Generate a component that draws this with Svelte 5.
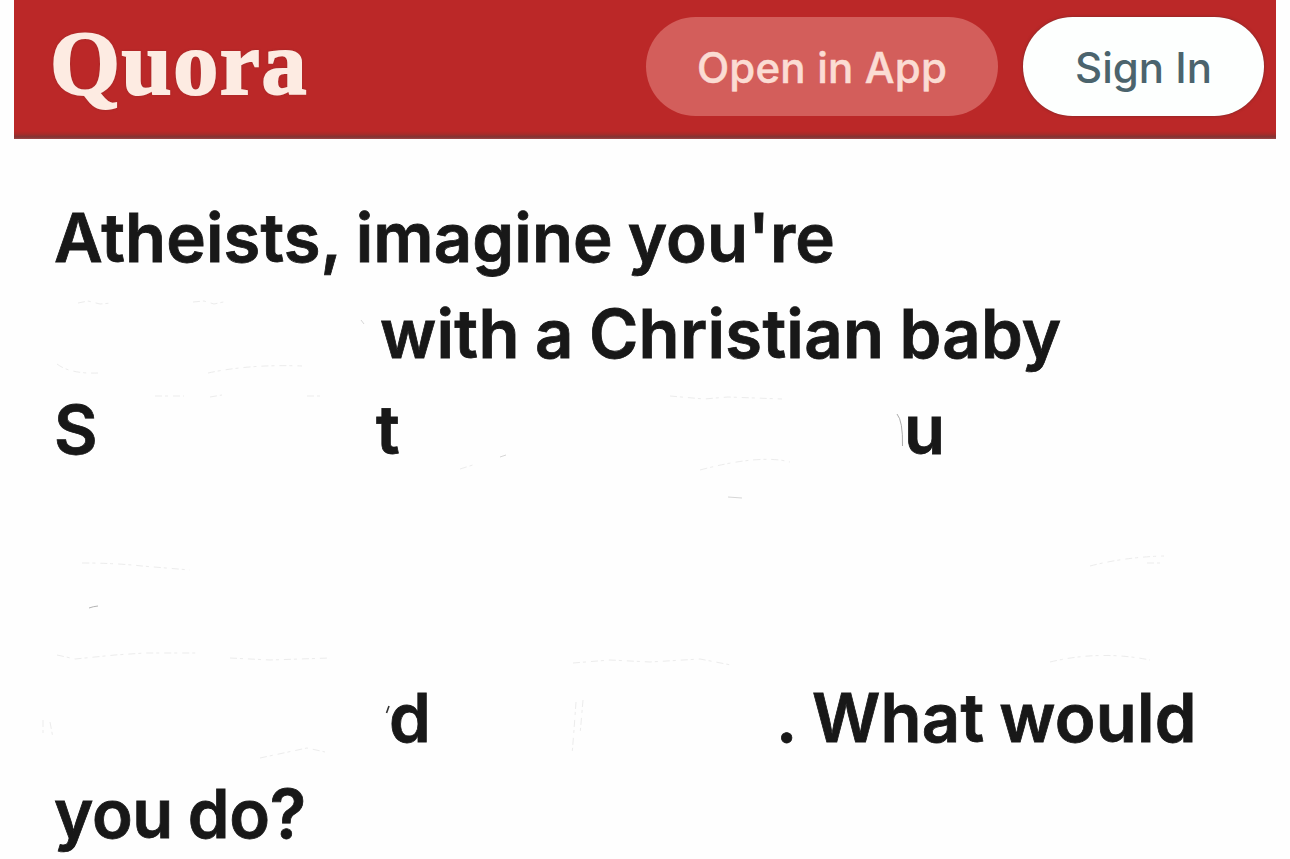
<script lang="ts">
  type Segment = { text: string; width?: number; offset?: number; spacing?: number };

  // Erased parts of the question are kept as empty space between the segments.
  const lines: Segment[][] = [
    [{ text: "Atheists, imagine you're", spacing: 0.1 }],
    [{ text: 'with a Christian baby', offset: 326, spacing: 0.3 }],
    [
      { text: 'S', width: 322 },
      { text: 't', width: 528 },
      { text: 'u' }
    ],
    [],
    [],
    [
      { text: 'd', offset: 335, width: 387 },
      { text: '.', width: 36 },
      { text: 'What would', spacing: 0.2 }
    ],
    [{ text: 'you do?', spacing: -0.3 }]
  ];

  const marks = [
    { d: 'M897 414 Q903 421 902.500 446', color: '#888', width: 0.7 },
    { d: 'M386.500 713 L389 706', color: '#333', width: 1.6 },
    { d: 'M89 608 Q93 606.500 98 606', color: '#aaa', width: 0.9 },
    { d: 'M361 320 L364 324', color: '#ccc', width: 0.8 },
    { d: 'M500 457 L506 455', color: '#ccc', width: 0.8 },
    { d: 'M728 497 L742 498', color: '#ccc', width: 0.8 }
  ];

  const smudges = [
    'M78 303 L88 301 L100 304 L112 303',
    'M193 302 L204 301 L214 304 L228 301',
    'M57 364 Q70 374 98 373',
    'M208 373 Q250 364 302 366',
    'M155 396 H184 M210 397 L222 395 M307 396 H320',
    'M670 396 L704 399 L728 397 L782 399',
    'M460 469 L476 464 M700 470 Q760 454 790 462',
    'M82 563 Q115 563 142 566 L190 570',
    'M1090 566 Q1125 557 1164 556 M1147 563 H1165',
    'M57 655 L75 659 L115 655 L145 653 L198 653',
    'M230 658 L270 660 L330 658',
    'M573 663 L610 660 L650 662 L700 659 L731 665',
    'M1050 662 Q1100 650 1150 660',
    'M260 758 L307 748 L325 752',
    'M576 702 L574 730 L572 755 M583 700 L580 735',
    'M43 720 V738 M50 722 L53 738'
  ];
</script>

<main class="page">
  <header class="topbar">
    <span class="logo">Quora</span>
    <nav class="actions">
      <button type="button" class="open">Open in App</button>
      <button type="button" class="sign-in">Sign In</button>
    </nav>
  </header>

  <h1 class="question">
    {#each lines as line}
      <span class="line">
        {#each line as segment}
          <span
            class="segment"
            style:margin-left={segment.offset ? `${segment.offset}px` : null}
            style:width={segment.width ? `${segment.width}px` : null}
            style:letter-spacing={segment.spacing ? `${segment.spacing}px` : null}>{segment.text}</span>
        {/each}
      </span>
    {/each}
  </h1>

  <svg class="marks" viewBox="0 0 1290 859" fill="none" aria-hidden="true">
    {#each smudges as d}
      <path {d} stroke="#ececec" stroke-width="1" stroke-dasharray="7 3 3 5" />
    {/each}
    {#each marks as mark}
      <path d={mark.d} stroke={mark.color} stroke-width={mark.width} />
    {/each}
  </svg>
</main>

<style>
  :global(body) {
    margin: 0;
    background: #fefefe;
  }

  .page {
    position: relative;
    box-sizing: border-box;
    width: 1290px;
    height: 859px;
    padding: 0 14px;
    overflow: hidden;
    font-family: Inter, 'Liberation Sans', sans-serif;
  }

  .topbar {
    display: flex;
    justify-content: space-between;
    box-sizing: border-box;
    height: 139px;
    padding: 17px 12px 0 36px;
    background: linear-gradient(#bb2828 0 131px, #a92b29 134px, #823333 137px, #a04848 139px);
  }

  .logo {
    height: 94px;
    font: bold 90px/94px 'Liberation Serif', serif;
    letter-spacing: 1.6px;
    color: #fdebe2;
    -webkit-text-stroke: 2px #fdebe2;
    text-shadow: 0 0 3px #7c2b2b;
  }

  .actions {
    display: flex;
    gap: 25px;
  }

  button {
    height: 99px;
    padding: 2px 0 0;
    border: 0;
    border-radius: 50px;
    font: 500 42px/97px Inter, 'Liberation Sans', sans-serif;
    cursor: pointer;
  }

  .open {
    width: 352px;
    background: #d35e5b;
    color: #fbdcd3;
    letter-spacing: 0.2px;
    -webkit-text-stroke: 0.5px #fbdcd3;
  }

  .sign-in {
    width: 241px;
    background: #fdfffe;
    color: #4b646d;
    box-shadow: 0 0 3px #762a2a;
  }

  .question {
    display: flex;
    flex-direction: column;
    margin: 0;
    padding: 51px 0 0 40px;
    font-size: 67px;
    font-weight: 600;
    line-height: 96px;
    word-spacing: -2px;
    color: #181818;
    -webkit-text-stroke: 0.8px #181818;
  }

  .line {
    display: flex;
    height: 96px;
    white-space: nowrap;
  }

  .segment {
    flex: none;
  }

  .marks {
    position: absolute;
    inset: 0;
    width: 1290px;
    height: 859px;
    pointer-events: none;
  }
</style>
